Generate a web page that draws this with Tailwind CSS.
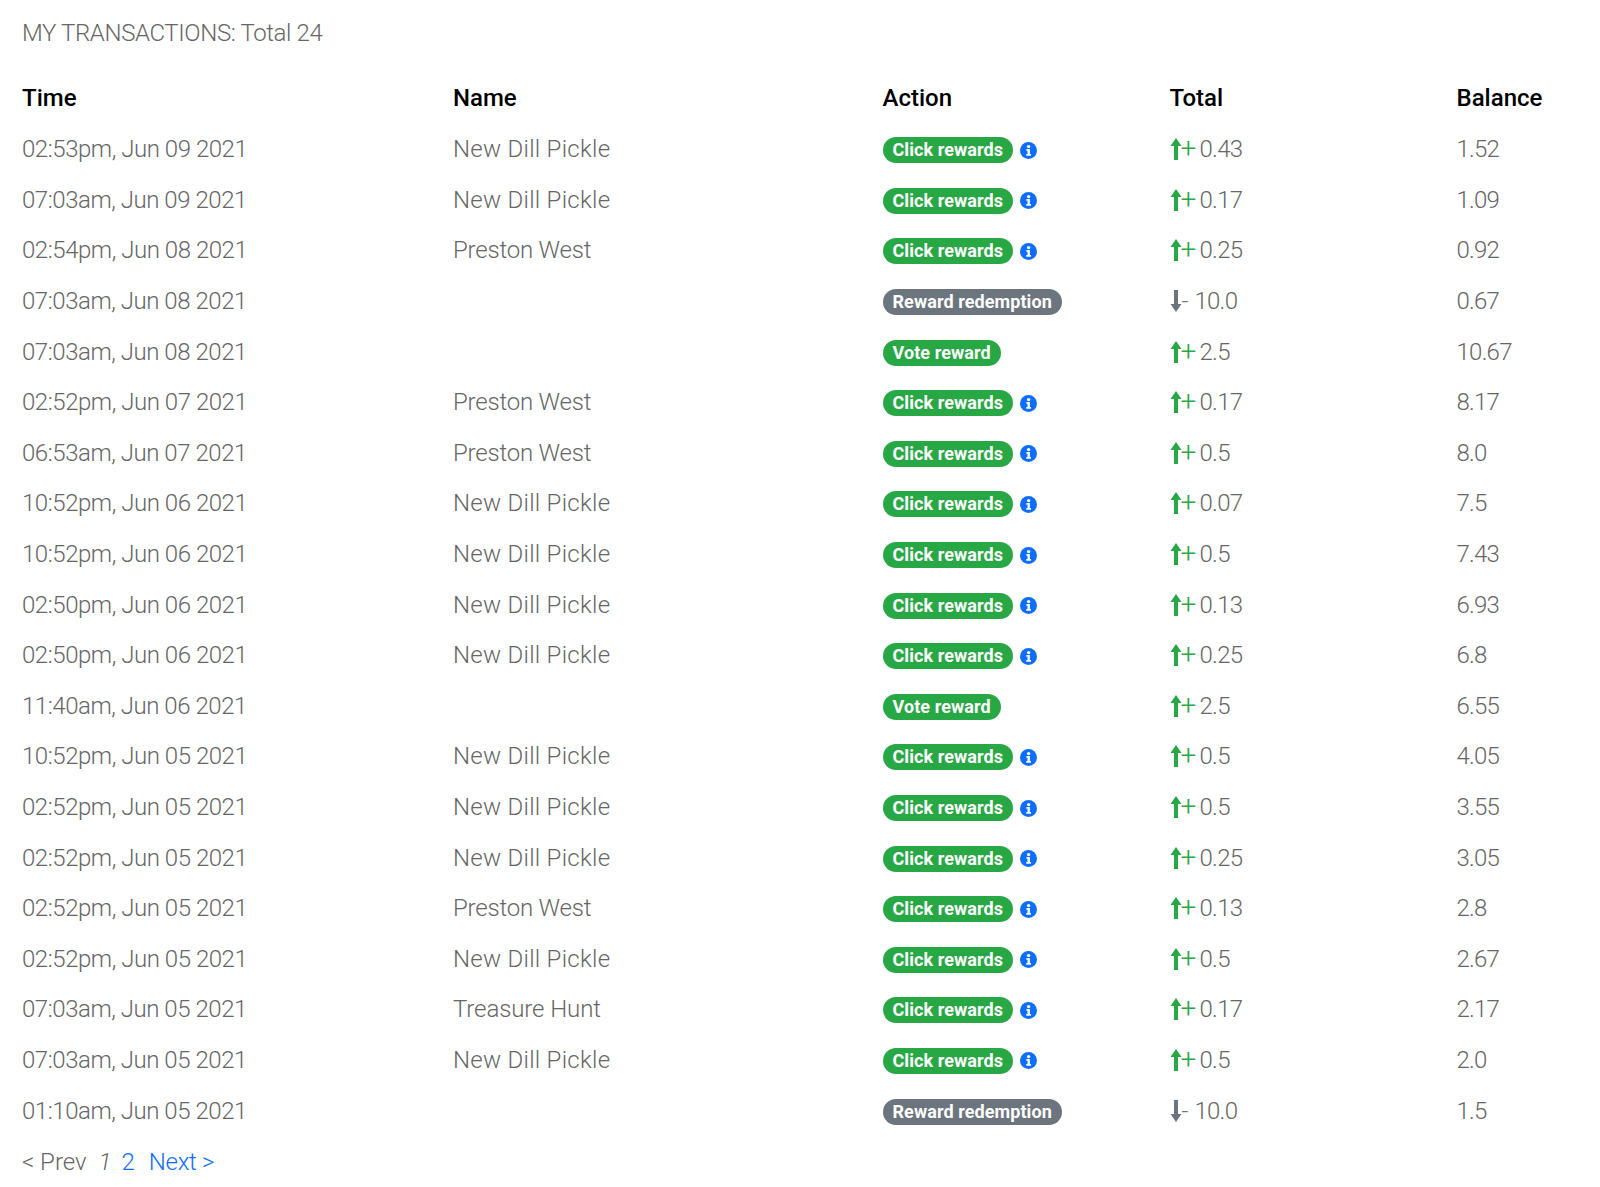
<!DOCTYPE html>
<html><head><meta charset="utf-8"><script src="https://cdn.jsdelivr.net/npm/@tailwindcss/browser@4"></script></head>
<body class="bg-white font-['Roboto',sans-serif] font-light text-[24px] text-[#666] overflow-hidden">
<svg class="hidden"><defs>
<symbol id="info" viewBox="0 0 17 17"><circle cx="8.5" cy="8.5" r="8.5" fill="#0d6efd"/><circle cx="8.6" cy="4.6" r="1.7" fill="#fff"/><path d="M6.4 7.1h3.5v5h1.1v1.6H6.3v-1.6h1.2V8.7H6.4z" fill="#fff"/></symbol>
<symbol id="up" viewBox="0 0 12 22"><path d="M6 0 11.5 8H8V22H4V8H.5z" fill="#28a745"/></symbol>
<symbol id="down" viewBox="0 0 12 22"><path d="M6 22 11.5 14H8V0H4V14H.5z" fill="#6c757d"/></symbol>
</defs></svg>
<main class="pl-[22px] pt-[18px]">
<h1 class="h-[30px] leading-[30px] tracking-[-.38px]">MY TRANSACTIONS: Total 24</h1>
<div class="grid grid-cols-[431px_429.5px_287px_287px_1fr] h-[50px] mt-[25px] mb-px items-center font-medium text-black"><div>Time</div><div>Name</div><div>Action</div><div>Total</div><div>Balance</div></div>

<div class="grid grid-cols-[431px_429.5px_287px_287px_1fr] h-[50.6px] items-center"><div class="tracking-[-.46px]">02:53pm, Jun 09 2021</div><div class="tracking-[.27px]">New Dill Pickle</div><div class="flex items-center gap-[7px] mt-[2px]"><span class="h-[26px] px-[10px] rounded-full bg-[#28a745] text-white text-[18px] tracking-[.08px] font-bold leading-[26px]">Click rewards</span><svg class="w-[17px] h-[17px]"><use href="#info"/></svg></div><div class="flex items-center"><svg class="w-[12px] h-[22px]"><use href="#up"/></svg><span class="text-[#28a745] text-[28px] mr-[6px] w-[13px] -ml-px">+</span><span class="tracking-[-.7px]">0.43</span></div><div class="tracking-[-.75px]">1.52</div></div>
<div class="grid grid-cols-[431px_429.5px_287px_287px_1fr] h-[50.6px] items-center"><div class="tracking-[-.46px]">07:03am, Jun 09 2021</div><div class="tracking-[.27px]">New Dill Pickle</div><div class="flex items-center gap-[7px] mt-[2px]"><span class="h-[26px] px-[10px] rounded-full bg-[#28a745] text-white text-[18px] tracking-[.08px] font-bold leading-[26px]">Click rewards</span><svg class="w-[17px] h-[17px]"><use href="#info"/></svg></div><div class="flex items-center"><svg class="w-[12px] h-[22px]"><use href="#up"/></svg><span class="text-[#28a745] text-[28px] mr-[6px] w-[13px] -ml-px">+</span><span class="tracking-[-.7px]">0.17</span></div><div class="tracking-[-.75px]">1.09</div></div>
<div class="grid grid-cols-[431px_429.5px_287px_287px_1fr] h-[50.6px] items-center"><div class="tracking-[-.46px]">02:54pm, Jun 08 2021</div><div class="tracking-[-.2px]">Preston West</div><div class="flex items-center gap-[7px] mt-[2px]"><span class="h-[26px] px-[10px] rounded-full bg-[#28a745] text-white text-[18px] tracking-[.08px] font-bold leading-[26px]">Click rewards</span><svg class="w-[17px] h-[17px]"><use href="#info"/></svg></div><div class="flex items-center"><svg class="w-[12px] h-[22px]"><use href="#up"/></svg><span class="text-[#28a745] text-[28px] mr-[6px] w-[13px] -ml-px">+</span><span class="tracking-[-.7px]">0.25</span></div><div class="tracking-[-.75px]">0.92</div></div>
<div class="grid grid-cols-[431px_429.5px_287px_287px_1fr] h-[50.6px] items-center"><div class="tracking-[-.46px]">07:03am, Jun 08 2021</div><div></div><div class="flex items-center gap-[7px] mt-[2px]"><span class="h-[26px] px-[10px] rounded-full bg-[#6c757d] text-white text-[18px] tracking-[.08px] font-bold leading-[26px]">Reward redemption</span></div><div class="flex items-center"><svg class="w-[12px] h-[22px]"><use href="#down"/></svg><span class="text-[#6c757d] mr-[6px]">-</span><span class="tracking-[-.7px]">10.0</span></div><div class="tracking-[-.75px]">0.67</div></div>
<div class="grid grid-cols-[431px_429.5px_287px_287px_1fr] h-[50.6px] items-center"><div class="tracking-[-.46px]">07:03am, Jun 08 2021</div><div></div><div class="flex items-center gap-[7px] mt-[2px]"><span class="h-[26px] px-[10px] rounded-full bg-[#28a745] text-white text-[18px] tracking-[.08px] font-bold leading-[26px]">Vote reward</span></div><div class="flex items-center"><svg class="w-[12px] h-[22px]"><use href="#up"/></svg><span class="text-[#28a745] text-[28px] mr-[6px] w-[13px] -ml-px">+</span><span class="tracking-[-.7px]">2.5</span></div><div class="tracking-[-.75px]">10.67</div></div>
<div class="grid grid-cols-[431px_429.5px_287px_287px_1fr] h-[50.6px] items-center"><div class="tracking-[-.46px]">02:52pm, Jun 07 2021</div><div class="tracking-[-.2px]">Preston West</div><div class="flex items-center gap-[7px] mt-[2px]"><span class="h-[26px] px-[10px] rounded-full bg-[#28a745] text-white text-[18px] tracking-[.08px] font-bold leading-[26px]">Click rewards</span><svg class="w-[17px] h-[17px]"><use href="#info"/></svg></div><div class="flex items-center"><svg class="w-[12px] h-[22px]"><use href="#up"/></svg><span class="text-[#28a745] text-[28px] mr-[6px] w-[13px] -ml-px">+</span><span class="tracking-[-.7px]">0.17</span></div><div class="tracking-[-.75px]">8.17</div></div>
<div class="grid grid-cols-[431px_429.5px_287px_287px_1fr] h-[50.6px] items-center"><div class="tracking-[-.46px]">06:53am, Jun 07 2021</div><div class="tracking-[-.2px]">Preston West</div><div class="flex items-center gap-[7px] mt-[2px]"><span class="h-[26px] px-[10px] rounded-full bg-[#28a745] text-white text-[18px] tracking-[.08px] font-bold leading-[26px]">Click rewards</span><svg class="w-[17px] h-[17px]"><use href="#info"/></svg></div><div class="flex items-center"><svg class="w-[12px] h-[22px]"><use href="#up"/></svg><span class="text-[#28a745] text-[28px] mr-[6px] w-[13px] -ml-px">+</span><span class="tracking-[-.7px]">0.5</span></div><div class="tracking-[-.75px]">8.0</div></div>
<div class="grid grid-cols-[431px_429.5px_287px_287px_1fr] h-[50.6px] items-center"><div class="tracking-[-.46px]">10:52pm, Jun 06 2021</div><div class="tracking-[.27px]">New Dill Pickle</div><div class="flex items-center gap-[7px] mt-[2px]"><span class="h-[26px] px-[10px] rounded-full bg-[#28a745] text-white text-[18px] tracking-[.08px] font-bold leading-[26px]">Click rewards</span><svg class="w-[17px] h-[17px]"><use href="#info"/></svg></div><div class="flex items-center"><svg class="w-[12px] h-[22px]"><use href="#up"/></svg><span class="text-[#28a745] text-[28px] mr-[6px] w-[13px] -ml-px">+</span><span class="tracking-[-.7px]">0.07</span></div><div class="tracking-[-.75px]">7.5</div></div>
<div class="grid grid-cols-[431px_429.5px_287px_287px_1fr] h-[50.6px] items-center"><div class="tracking-[-.46px]">10:52pm, Jun 06 2021</div><div class="tracking-[.27px]">New Dill Pickle</div><div class="flex items-center gap-[7px] mt-[2px]"><span class="h-[26px] px-[10px] rounded-full bg-[#28a745] text-white text-[18px] tracking-[.08px] font-bold leading-[26px]">Click rewards</span><svg class="w-[17px] h-[17px]"><use href="#info"/></svg></div><div class="flex items-center"><svg class="w-[12px] h-[22px]"><use href="#up"/></svg><span class="text-[#28a745] text-[28px] mr-[6px] w-[13px] -ml-px">+</span><span class="tracking-[-.7px]">0.5</span></div><div class="tracking-[-.75px]">7.43</div></div>
<div class="grid grid-cols-[431px_429.5px_287px_287px_1fr] h-[50.6px] items-center"><div class="tracking-[-.46px]">02:50pm, Jun 06 2021</div><div class="tracking-[.27px]">New Dill Pickle</div><div class="flex items-center gap-[7px] mt-[2px]"><span class="h-[26px] px-[10px] rounded-full bg-[#28a745] text-white text-[18px] tracking-[.08px] font-bold leading-[26px]">Click rewards</span><svg class="w-[17px] h-[17px]"><use href="#info"/></svg></div><div class="flex items-center"><svg class="w-[12px] h-[22px]"><use href="#up"/></svg><span class="text-[#28a745] text-[28px] mr-[6px] w-[13px] -ml-px">+</span><span class="tracking-[-.7px]">0.13</span></div><div class="tracking-[-.75px]">6.93</div></div>
<div class="grid grid-cols-[431px_429.5px_287px_287px_1fr] h-[50.6px] items-center"><div class="tracking-[-.46px]">02:50pm, Jun 06 2021</div><div class="tracking-[.27px]">New Dill Pickle</div><div class="flex items-center gap-[7px] mt-[2px]"><span class="h-[26px] px-[10px] rounded-full bg-[#28a745] text-white text-[18px] tracking-[.08px] font-bold leading-[26px]">Click rewards</span><svg class="w-[17px] h-[17px]"><use href="#info"/></svg></div><div class="flex items-center"><svg class="w-[12px] h-[22px]"><use href="#up"/></svg><span class="text-[#28a745] text-[28px] mr-[6px] w-[13px] -ml-px">+</span><span class="tracking-[-.7px]">0.25</span></div><div class="tracking-[-.75px]">6.8</div></div>
<div class="grid grid-cols-[431px_429.5px_287px_287px_1fr] h-[50.6px] items-center"><div class="tracking-[-.46px]">11:40am, Jun 06 2021</div><div></div><div class="flex items-center gap-[7px] mt-[2px]"><span class="h-[26px] px-[10px] rounded-full bg-[#28a745] text-white text-[18px] tracking-[.08px] font-bold leading-[26px]">Vote reward</span></div><div class="flex items-center"><svg class="w-[12px] h-[22px]"><use href="#up"/></svg><span class="text-[#28a745] text-[28px] mr-[6px] w-[13px] -ml-px">+</span><span class="tracking-[-.7px]">2.5</span></div><div class="tracking-[-.75px]">6.55</div></div>
<div class="grid grid-cols-[431px_429.5px_287px_287px_1fr] h-[50.6px] items-center"><div class="tracking-[-.46px]">10:52pm, Jun 05 2021</div><div class="tracking-[.27px]">New Dill Pickle</div><div class="flex items-center gap-[7px] mt-[2px]"><span class="h-[26px] px-[10px] rounded-full bg-[#28a745] text-white text-[18px] tracking-[.08px] font-bold leading-[26px]">Click rewards</span><svg class="w-[17px] h-[17px]"><use href="#info"/></svg></div><div class="flex items-center"><svg class="w-[12px] h-[22px]"><use href="#up"/></svg><span class="text-[#28a745] text-[28px] mr-[6px] w-[13px] -ml-px">+</span><span class="tracking-[-.7px]">0.5</span></div><div class="tracking-[-.75px]">4.05</div></div>
<div class="grid grid-cols-[431px_429.5px_287px_287px_1fr] h-[50.6px] items-center"><div class="tracking-[-.46px]">02:52pm, Jun 05 2021</div><div class="tracking-[.27px]">New Dill Pickle</div><div class="flex items-center gap-[7px] mt-[2px]"><span class="h-[26px] px-[10px] rounded-full bg-[#28a745] text-white text-[18px] tracking-[.08px] font-bold leading-[26px]">Click rewards</span><svg class="w-[17px] h-[17px]"><use href="#info"/></svg></div><div class="flex items-center"><svg class="w-[12px] h-[22px]"><use href="#up"/></svg><span class="text-[#28a745] text-[28px] mr-[6px] w-[13px] -ml-px">+</span><span class="tracking-[-.7px]">0.5</span></div><div class="tracking-[-.75px]">3.55</div></div>
<div class="grid grid-cols-[431px_429.5px_287px_287px_1fr] h-[50.6px] items-center"><div class="tracking-[-.46px]">02:52pm, Jun 05 2021</div><div class="tracking-[.27px]">New Dill Pickle</div><div class="flex items-center gap-[7px] mt-[2px]"><span class="h-[26px] px-[10px] rounded-full bg-[#28a745] text-white text-[18px] tracking-[.08px] font-bold leading-[26px]">Click rewards</span><svg class="w-[17px] h-[17px]"><use href="#info"/></svg></div><div class="flex items-center"><svg class="w-[12px] h-[22px]"><use href="#up"/></svg><span class="text-[#28a745] text-[28px] mr-[6px] w-[13px] -ml-px">+</span><span class="tracking-[-.7px]">0.25</span></div><div class="tracking-[-.75px]">3.05</div></div>
<div class="grid grid-cols-[431px_429.5px_287px_287px_1fr] h-[50.6px] items-center"><div class="tracking-[-.46px]">02:52pm, Jun 05 2021</div><div class="tracking-[-.2px]">Preston West</div><div class="flex items-center gap-[7px] mt-[2px]"><span class="h-[26px] px-[10px] rounded-full bg-[#28a745] text-white text-[18px] tracking-[.08px] font-bold leading-[26px]">Click rewards</span><svg class="w-[17px] h-[17px]"><use href="#info"/></svg></div><div class="flex items-center"><svg class="w-[12px] h-[22px]"><use href="#up"/></svg><span class="text-[#28a745] text-[28px] mr-[6px] w-[13px] -ml-px">+</span><span class="tracking-[-.7px]">0.13</span></div><div class="tracking-[-.75px]">2.8</div></div>
<div class="grid grid-cols-[431px_429.5px_287px_287px_1fr] h-[50.6px] items-center"><div class="tracking-[-.46px]">02:52pm, Jun 05 2021</div><div class="tracking-[.27px]">New Dill Pickle</div><div class="flex items-center gap-[7px] mt-[2px]"><span class="h-[26px] px-[10px] rounded-full bg-[#28a745] text-white text-[18px] tracking-[.08px] font-bold leading-[26px]">Click rewards</span><svg class="w-[17px] h-[17px]"><use href="#info"/></svg></div><div class="flex items-center"><svg class="w-[12px] h-[22px]"><use href="#up"/></svg><span class="text-[#28a745] text-[28px] mr-[6px] w-[13px] -ml-px">+</span><span class="tracking-[-.7px]">0.5</span></div><div class="tracking-[-.75px]">2.67</div></div>
<div class="grid grid-cols-[431px_429.5px_287px_287px_1fr] h-[50.6px] items-center"><div class="tracking-[-.46px]">07:03am, Jun 05 2021</div><div class="tracking-[-.1px]">Treasure Hunt</div><div class="flex items-center gap-[7px] mt-[2px]"><span class="h-[26px] px-[10px] rounded-full bg-[#28a745] text-white text-[18px] tracking-[.08px] font-bold leading-[26px]">Click rewards</span><svg class="w-[17px] h-[17px]"><use href="#info"/></svg></div><div class="flex items-center"><svg class="w-[12px] h-[22px]"><use href="#up"/></svg><span class="text-[#28a745] text-[28px] mr-[6px] w-[13px] -ml-px">+</span><span class="tracking-[-.7px]">0.17</span></div><div class="tracking-[-.75px]">2.17</div></div>
<div class="grid grid-cols-[431px_429.5px_287px_287px_1fr] h-[50.6px] items-center"><div class="tracking-[-.46px]">07:03am, Jun 05 2021</div><div class="tracking-[.27px]">New Dill Pickle</div><div class="flex items-center gap-[7px] mt-[2px]"><span class="h-[26px] px-[10px] rounded-full bg-[#28a745] text-white text-[18px] tracking-[.08px] font-bold leading-[26px]">Click rewards</span><svg class="w-[17px] h-[17px]"><use href="#info"/></svg></div><div class="flex items-center"><svg class="w-[12px] h-[22px]"><use href="#up"/></svg><span class="text-[#28a745] text-[28px] mr-[6px] w-[13px] -ml-px">+</span><span class="tracking-[-.7px]">0.5</span></div><div class="tracking-[-.75px]">2.0</div></div>
<div class="grid grid-cols-[431px_429.5px_287px_287px_1fr] h-[50.6px] items-center"><div class="tracking-[-.46px]">01:10am, Jun 05 2021</div><div></div><div class="flex items-center gap-[7px] mt-[2px]"><span class="h-[26px] px-[10px] rounded-full bg-[#6c757d] text-white text-[18px] tracking-[.08px] font-bold leading-[26px]">Reward redemption</span></div><div class="flex items-center"><svg class="w-[12px] h-[22px]"><use href="#down"/></svg><span class="text-[#6c757d] mr-[6px]">-</span><span class="tracking-[-.7px]">10.0</span></div><div class="tracking-[-.75px]">1.5</div></div>

<nav class="flex items-center h-[52px]"><span class="mr-[12px]">&lt; Prev</span><em class="mr-[10px]">1</em><a class="text-[#0d6efd] mr-[14px]">2</a><a class="text-[#0d6efd] tracking-[-.3px]">Next &gt;</a></nav>
</main>
</body></html>
